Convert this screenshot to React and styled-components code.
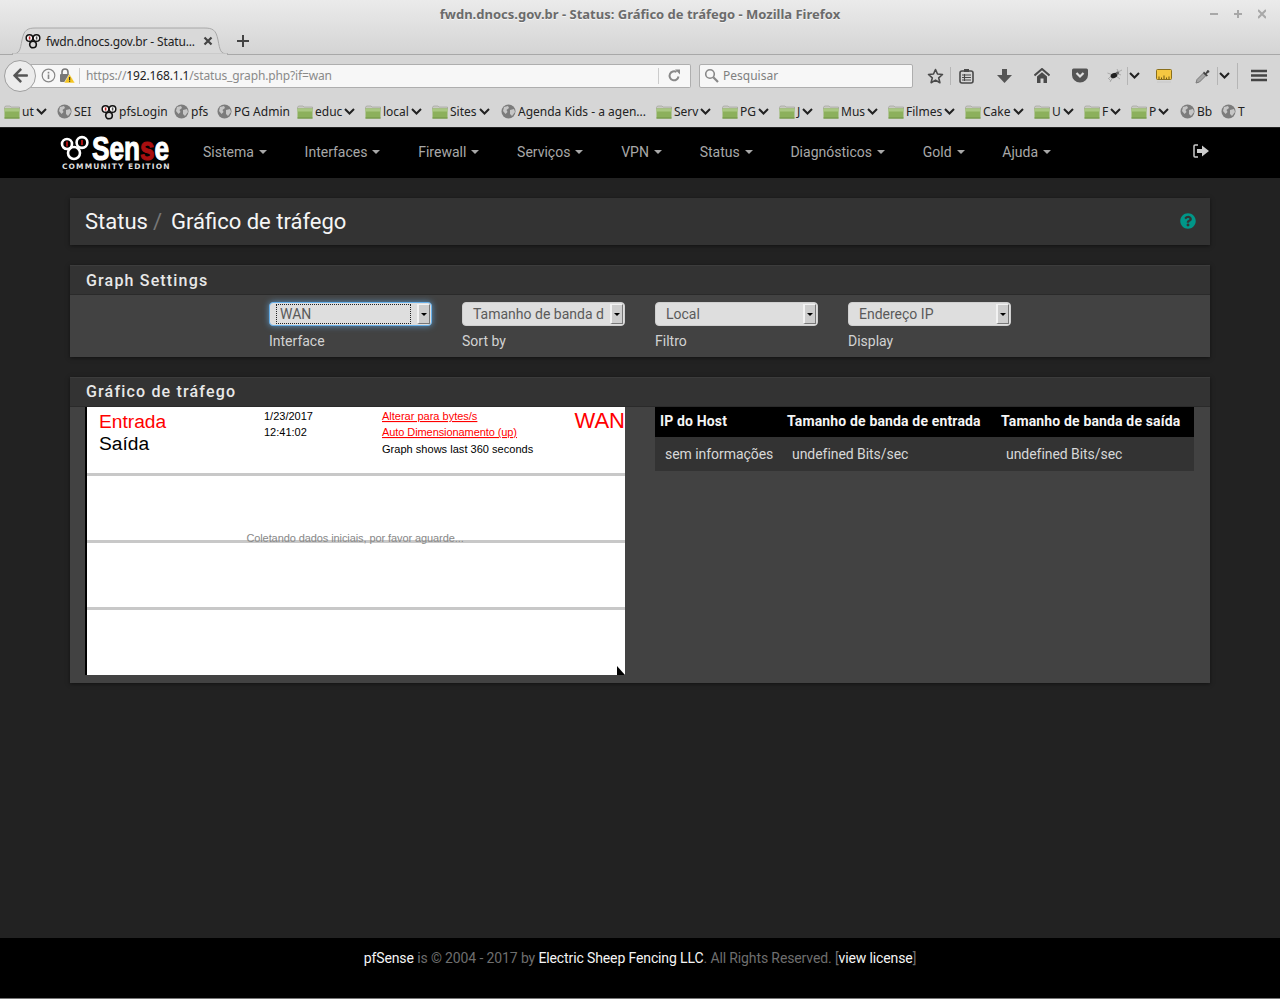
import * as React from 'react'
import styled, { createGlobalStyle } from 'styled-components'
import { FaArrowLeft, FaQuestionCircle } from 'react-icons/fa'

const BOOKMARKS = [
  { kind: 'folder', label: 'ut', more: true, w: 53 },
  { kind: 'globe', label: 'SEI', w: 44 },
  { kind: 'pf', label: 'pfsLogin', w: 73 },
  { kind: 'globe', label: 'pfs', w: 43 },
  { kind: 'globe', label: 'PG Admin', w: 80 },
  { kind: 'folder', label: 'educ', more: true, w: 68 },
  { kind: 'folder', label: 'local', more: true, w: 67 },
  { kind: 'folder', label: 'Sites', more: true, w: 69 },
  { kind: 'globe', label: 'Agenda Kids - a agen...', w: 155 },
  { kind: 'folder', label: 'Serv', more: true, w: 66 },
  { kind: 'folder', label: 'PG', more: true, w: 57 },
  { kind: 'folder', label: 'J', more: true, w: 44 },
  { kind: 'folder', label: 'Mus', more: true, w: 65 },
  { kind: 'folder', label: 'Filmes', more: true, w: 77 },
  { kind: 'folder', label: 'Cake', more: true, w: 69 },
  { kind: 'folder', label: 'U', more: true, w: 50 },
  { kind: 'folder', label: 'F', more: true, w: 47 },
  { kind: 'folder', label: 'P', more: true, w: 49 },
  { kind: 'globe', label: 'Bb', w: 41 },
  { kind: 'globe', label: 'T', w: 30 },
]

const NAV = ['Sistema', 'Interfaces', 'Firewall', 'Serviços', 'VPN', 'Status', 'Diagnósticos', 'Gold', 'Ajuda']

const SELECTS = [
  { value: 'WAN', label: 'Interface', focused: true },
  { value: 'Tamanho de banda d', label: 'Sort by' },
  { value: 'Local', label: 'Filtro' },
  { value: 'Endereço IP', label: 'Display' },
]

const FolderIcon = () => (
  <svg width="16" height="14" viewBox="0 0 16 14">
    <path d="M0.5 2.5 L1.5 1 H6 L7 2 H15.5 V4 H0.5 Z" fill="#c9c9c4" stroke="#9a9a94" strokeWidth="0.6" />
    <rect x="0.5" y="3.5" width="15" height="10" fill="#8cb05c" />
    <rect x="0.5" y="3.5" width="15" height="3" fill="#a9c782" />
    <rect x="0.5" y="12.5" width="15" height="1" fill="#6f9244" />
  </svg>
)

const GlobeIcon = () => (
  <svg width="15" height="15" viewBox="0 0 15 15">
    <circle cx="7.5" cy="7.5" r="7" fill="#7c7c7c" />
    <path d="M3 3 L7 2 L8 4 L5.5 6 L6.5 8 L4.5 10 L2 7 Z M9 6 L13 5 L14 8 L11 12 L9 10 Z" fill="#c6c6c6" />
  </svg>
)

const PfIcon = () => (
  <svg width="16" height="16" viewBox="0 0 16 16">
    <circle cx="4.5" cy="5" r="3.3" fill="#fff" stroke="#111" strokeWidth="1.5" />
    <circle cx="11.5" cy="5" r="3.3" fill="#fff" stroke="#111" strokeWidth="1.5" />
    <circle cx="8" cy="11.5" r="3.3" fill="none" stroke="#111" strokeWidth="1.6" />
    <rect x="3.8" y="3.4" width="1.6" height="3.2" fill="#b22" />
    <rect x="10.8" y="3.4" width="1.6" height="3.2" fill="#555" />
  </svg>
)

const Chevron = () => (
  <svg width="11" height="7" viewBox="0 0 11 7">
    <path d="M1 1 L5.5 5.5 L10 1" fill="none" stroke="#222" strokeWidth="2" />
  </svg>
)

const BookmarkIcon = ({ kind }) => {
  if (kind === 'folder') return <FolderIcon />
  if (kind === 'pf') return <PfIcon />
  return <GlobeIcon />
}

const PageGlobal = createGlobalStyle`
  html, body {
    margin: 0;
    padding: 0;
    height: 100%;
    overflow: hidden;
    background: #222;
  }
  * { box-sizing: border-box; }
`

const Wrapper = styled.div`
  width: 1280px;
  height: 999px;
  display: flex;
  flex-direction: column;
  font-family: Roboto, sans-serif;
`

const Chrome = styled.div`
  flex: none;
  height: 128px;
  display: flex;
  flex-direction: column;
  background: #d6d6d6;
  border-bottom: 1px solid #222;
  font-family: "Noto Sans", sans-serif;
`

const TitleBar = styled.div`
  height: 55px;
  flex: none;
  display: flex;
  flex-direction: column;
  background: linear-gradient(#ebebeb, #d4d4d4);
  border-bottom: 1px solid #a8a8a8;
`

const WindowTitle = styled.div`
  height: 27px;
  flex: none;
  padding-top: 6px;
  text-align: center;
  font-size: 13px;
  line-height: 17px;
  font-weight: 700;
  color: #6b6b6b;
  text-shadow: 0 1px 0 #f4f4f4;
  position: relative;
`

const WindowControls = styled.div`
  position: absolute;
  right: 14px;
  top: 8px;
  display: flex;
  gap: 16px;
`

const TabStrip = styled.div`
  display: flex;
  align-items: center;
  height: 27px;
  padding-left: 12px;
`

const Tab = styled.div`
  position: relative;
  width: 216px;
  height: 28px;
  margin-bottom: -1px;
  display: flex;
  align-items: center;
  padding: 0 15px 0 13px;
  gap: 5px;
  font-size: 12px;
  letter-spacing: -0.15px;
  color: #222;
`

const TabShape = styled.svg`
  position: absolute;
  left: 0;
  top: 0;
`

const TabLabel = styled.span`
  position: relative;
  flex: 1;
  white-space: nowrap;
`

const TabIcon = styled.span`
  position: relative;
  display: flex;
`

const NewTab = styled.div`
  display: flex;
  margin-left: 8px;
`

const ToolRow = styled.div`
  height: 41px;
  flex: none;
  display: flex;
  align-items: center;
  padding-left: 4px;
`

const BackButton = styled.div`
  width: 32px;
  height: 32px;
  flex: none;
  border-radius: 50%;
  background: #ececec;
  border: 1px solid #9f9f9f;
  display: flex;
  align-items: center;
  justify-content: center;
  color: #555;
  font-size: 17px;
  position: relative;
  z-index: 1;
`

const UrlBar = styled.div`
  width: 660px;
  height: 24px;
  margin-left: -5px;
  flex: none;
  display: flex;
  align-items: center;
  background: #f7f7f7;
  border: 1px solid #aeaeae;
  border-left: none;
  border-radius: 0 2px 2px 0;
  padding-left: 10px;
  font-size: 12px;
  color: #8a8a8a;
`

const UrlSecurity = styled.div`
  display: flex;
  align-items: center;
  gap: 3px;
  width: 39px;
  height: 16px;
  margin-right: 6px;
  border-right: 1px solid #ccc;
`

const UrlText = styled.div`
  flex: 1;
  white-space: nowrap;
  letter-spacing: -0.14px;
`

const UrlHost = styled.span`
  color: #222;
`

const Reload = styled.div`
  width: 32px;
  height: 16px;
  border-left: 1px solid #ccc;
  display: flex;
  align-items: center;
  justify-content: center;
`

const SearchBar = styled.div`
  width: 214px;
  height: 24px;
  margin-left: 8px;
  flex: none;
  display: flex;
  align-items: center;
  gap: 4px;
  padding-left: 4px;
  background: #f7f7f7;
  border: 1px solid #aeaeae;
  border-radius: 2px;
  font-size: 12px;
  color: #808080;
`

const ToolGroup = styled.div`
  display: flex;
  align-items: center;
  margin-left: 8px;
  height: 37px;
  color: #555;
`

const Slot = styled.div`
  width: ${p => p.$w}px;
  flex: none;
  display: flex;
  justify-content: center;
  align-items: center;
  font-size: 15px;
`

const ToolDivider = styled.div`
  width: 1px;
  flex: none;
  height: ${p => p.$h}px;
  background: #b5b5b5;
  margin-left: ${p => p.$ml || 0}px;
`

const BookmarkRow = styled.div`
  flex: 1;
  display: flex;
  align-items: center;
  padding-left: 4px;
  font-size: 12px;
  color: #222;
  white-space: nowrap;
`

const Bookmark = styled.div`
  width: ${p => p.$w}px;
  flex: none;
  display: flex;
  align-items: center;
  gap: 2px;
`

const TopNav = styled.nav`
  flex: none;
  height: 51px;
  background: #000;
  display: flex;
  align-items: center;
  padding-left: 60px;
  border-bottom: 1px solid #222;
`

const Logo = styled.div`
  width: 112px;
  flex: none;
  height: 37px;
  display: flex;
  flex-wrap: wrap;
  align-items: flex-start;
  margin-right: 31px;
`

const LogoRings = styled.svg`
  overflow: visible;
`

const LogoWord = styled.span`
  display: block;
  font-family: "Liberation Sans", sans-serif;
  font-weight: 700;
  font-size: 34px;
  line-height: 27px;
  height: 27px;
  color: #fff;
  -webkit-text-stroke: 1.1px currentColor;
  transform: scaleX(0.77);
  transform-origin: left center;
  white-space: nowrap;
  width: 80px;
  margin-left: 1px;
`

const LogoRed = styled.span`
  color: #a80f10;
`

const LogoSub = styled.div`
  width: 112px;
  margin-top: 0;
  padding-left: 2px;
  font-family: "DejaVu Sans", sans-serif;
  font-size: 7.5px;
  line-height: 9px;
  font-weight: 700;
  letter-spacing: 1.1px;
  color: #ddd;
  white-space: nowrap;
`

const NavList = styled.div`
  display: flex;
  gap: 37.75px;
  flex: 1;
  margin-top: -2px;
`

const NavLink = styled.div`
  display: flex;
  align-items: center;
  gap: 5px;
  font-size: 14px;
  color: #a8a8a8;
  white-space: nowrap;
`

const Caret = styled.span`
  width: 0;
  height: 0;
  border-left: 4px solid transparent;
  border-right: 4px solid transparent;
  border-top: 4px solid #a8a8a8;
`

const LogoutLink = styled.div`
  display: flex;
  margin-right: 71px;
  margin-top: -4px;
`

const Content = styled.main`
  flex: 1;
  background: #222;
  padding: 19px 70px 0;
`

const TitlePanel = styled.div`
  height: 47px;
  background: #333;
  box-shadow: 0 1px 4px rgba(0, 0, 0, 0.5);
  display: flex;
  align-items: center;
  justify-content: space-between;
  padding: 0 14px 0 15px;
  margin-bottom: 20px;
`

const Crumbs = styled.h1`
  margin: 0;
  font-size: 22px;
  font-weight: 400;
  color: #f5f5f5;
  display: flex;
  align-items: baseline;
`

const CrumbSep = styled.span`
  color: #777;
  margin: 0 9px 0 5px;
`

const HelpLink = styled.div`
  display: flex;
  color: #009688;
  font-size: 16px;
  margin-top: -1px;
`

const Panel = styled.section`
  background: #424242;
  box-shadow: 0 1px 4px rgba(0, 0, 0, 0.5);
  margin-bottom: 20px;
`

const PanelHeading = styled.h2`
  margin: 0;
  height: 30px;
  padding: 0 16px;
  background: #333;
  border-top: 1px solid #3c3c3c;
  border-bottom: 1px solid #2a2a2a;
  font-size: 16px;
  line-height: ${p => p.$lh}px;
  font-weight: 500;
  letter-spacing: 1.17px;
  color: #e8e8e8;
`

const SettingsBody = styled.div`
  height: 62px;
  display: grid;
  grid-template-columns: repeat(4, 193px);
  padding: 7px 0 0 199px;
`

const Field = styled.div`
  display: flex;
  flex-direction: column;
  gap: 7px;
`

const SelectBox = styled.div`
  width: 163px;
  height: 24px;
  display: flex;
  align-items: center;
  padding: 1px 1px 1px ${p => (p.$focused ? 6 : 10)}px;
  border-radius: 4px;
  background: #dedede;
  color: #5a5a5a;
  font-size: 14px;
  border: 1px solid ${p => (p.$focused ? '#66afe9' : '#cfcfcf')};
  box-shadow: ${p => (p.$focused ? '0 0 6px rgba(102, 175, 233, 0.75)' : 'none')};
`

const SelectValue = styled.span`
  flex: 1;
  min-width: 0;
  white-space: nowrap;
  line-height: 20px;
  margin-right: ${p => (p.$focused ? 6 : 7)}px;
  padding-left: ${p => (p.$focused ? 4 : 0)}px;
  outline: ${p => (p.$focused ? '1px dotted #222' : 'none')};
  outline-offset: -1px;
`

const SelectArrow = styled.span`
  width: 13px;
  height: 20px;
  flex: none;
  background: #cdcdcd;
  border-left: 2px solid #f2f2f2;
  border-top: 1px solid #f2f2f2;
  border-right: 1px solid #777;
  border-bottom: 1px solid #777;
  display: flex;
  align-items: center;
  justify-content: center;
  &::after {
    content: '';
    border-left: 3px solid transparent;
    border-right: 3px solid transparent;
    border-top: 3px solid #000;
  }
`

const FieldLabel = styled.label`
  font-size: 14px;
  line-height: 17px;
  color: #d2d2d2;
`

const GraphBody = styled.div`
  display: flex;
  align-items: flex-start;
  gap: 30px;
  padding: 0 16px 8px 15px;
`

const GraphFrame = styled.div`
  position: relative;
  width: 540px;
  height: 268px;
  flex: none;
  background: #fff;
  border-left: 2px solid #000;
`

const ResizeHandle = styled.svg`
  position: absolute;
  right: 0;
  bottom: 0;
`

const HostTable = styled.div`
  width: 539px;
  flex: none;
  font-size: 14px;
`

const HostRow = styled.div`
  display: grid;
  grid-template-columns: 127px 214px 198px;
  align-items: center;
  height: ${p => p.$h}px;
  background: ${p => p.$bg};
`

const HostHead = styled.div`
  padding: 0 0 2px 5px;
  font-weight: 700;
  letter-spacing: 0.15px;
  color: #f5f5f5;
  white-space: nowrap;
`

const HostCell = styled.div`
  padding-left: 10px;
  letter-spacing: -0.05px;
  color: #d8d8d8;
  white-space: nowrap;
`

const Footer = styled.footer`
  flex: none;
  height: 61px;
  background: #000;
  border-bottom: 1px solid #777;
  text-align: center;
  padding-top: 12px;
  font-size: 14px;
  line-height: 17px;
  letter-spacing: -0.12px;
  color: #6e6e6e;
`

const FooterLink = styled.span`
  color: #f5f5f5;
`

const App = () => (
  <Wrapper>
    <PageGlobal />
    <Chrome>
      <TitleBar>
        <WindowTitle>
          fwdn.dnocs.gov.br - Status: Gráfico de tráfego - Mozilla Firefox
          <WindowControls>
            <svg width="8" height="12" viewBox="0 0 8 12"><path d="M0 6 H8" stroke="#a8a8a8" strokeWidth="2" /></svg>
            <svg width="8" height="12" viewBox="0 0 8 12"><path d="M0 6 H8 M4 2 V10" stroke="#a8a8a8" strokeWidth="2" /></svg>
            <svg width="8" height="12" viewBox="0 0 8 12"><path d="M0 2 L8 10 M8 2 L0 10" stroke="#a8a8a8" strokeWidth="2" /></svg>
          </WindowControls>
        </WindowTitle>
        <TabStrip>
          <Tab>
            <TabShape width="216" height="28" viewBox="0 0 216 28">
              <path d="M0 27 C8 27 8 23 10 13 C12 3 15 1 24 1 H192 C201 1 204 3 206 13 C208 23 208 27 216 27 Z" fill="#d9d9d9" stroke="#a8a8a8" />
              <path d="M1 27.5 H215" stroke="#d6d6d6" strokeWidth="2" />
            </TabShape>
            <TabIcon><PfIcon /></TabIcon>
            <TabLabel>fwdn.dnocs.gov.br - Statu...</TabLabel>
            <TabIcon>
              <svg width="10" height="10" viewBox="0 0 10 10"><path d="M1.5 1.5 L8.5 8.5 M8.5 1.5 L1.5 8.5" stroke="#444" strokeWidth="2.2" /></svg>
            </TabIcon>
          </Tab>
          <NewTab>
            <svg width="14" height="14" viewBox="0 0 14 14"><path d="M7 1 V13 M1 7 H13" stroke="#444" strokeWidth="2" /></svg>
          </NewTab>
        </TabStrip>
      </TitleBar>
      <ToolRow>
        <BackButton><FaArrowLeft /></BackButton>
        <UrlBar>
          <UrlSecurity>
            <svg width="15" height="15" viewBox="0 0 15 15">
              <circle cx="7.5" cy="7.5" r="6.3" fill="none" stroke="#888" strokeWidth="1.2" />
              <rect x="6.7" y="6.5" width="1.6" height="4.5" fill="#888" />
              <rect x="6.7" y="3.8" width="1.6" height="1.7" fill="#888" />
            </svg>
            <svg width="16" height="15" viewBox="0 0 16 15">
              <path d="M3 6 V4 a3 3 0 0 1 6 0 V6" fill="none" stroke="#777" strokeWidth="1.6" />
              <rect x="1" y="6" width="10" height="8" rx="1" fill="#777" />
              <path d="M10.5 6 L16 15 H5 Z" fill="#f5c51e" stroke="#f7f7f7" strokeWidth="0.6" />
              <rect x="10" y="9" width="1.2" height="3" fill="#333" />
              <rect x="10" y="12.6" width="1.2" height="1.2" fill="#333" />
            </svg>
          </UrlSecurity>
          <UrlText>https://<UrlHost>192.168.1.1</UrlHost>/status_graph.php?if=wan</UrlText>
          <Reload>
            <svg width="13" height="13" viewBox="0 0 13 13">
              <path d="M10.5 7.5 A4.5 4.5 0 1 1 8.5 3" fill="none" stroke="#888" strokeWidth="2" />
              <path d="M7 0.5 L12 0.5 L12 5.5 Z" fill="#888" />
            </svg>
          </Reload>
        </UrlBar>
        <SearchBar>
          <svg width="15" height="15" viewBox="0 0 15 15">
            <circle cx="6" cy="6" r="4.3" fill="none" stroke="#888" strokeWidth="1.6" />
            <path d="M9.3 9.3 L14 14" stroke="#888" strokeWidth="2.2" />
          </svg>
          Pesquisar
        </SearchBar>
        <ToolGroup>
          <Slot $w={28}>
            <svg width="17" height="16" viewBox="0 0 17 16">
              <path d="M8.5 1.5 L10.5 6 L15.5 6.5 L11.7 9.8 L12.9 14.7 L8.5 12.1 L4.1 14.7 L5.3 9.8 L1.5 6.5 L6.5 6 Z" fill="none" stroke="#4a4a4a" strokeWidth="1.6" strokeLinejoin="round" />
            </svg>
          </Slot>
          <ToolDivider $h={18} $ml={1} />
          <Slot $w={30}>
            <svg width="15" height="16" viewBox="0 0 15 16">
              <rect x="1" y="3" width="13" height="12" rx="2" fill="none" stroke="#4a4a4a" strokeWidth="1.6" />
              <rect x="5" y="1" width="5" height="3" fill="#4a4a4a" />
              <path d="M3 7 H12 M3 9.5 H12 M3 12 H12 M5.5 6 V13" stroke="#4a4a4a" strokeWidth="1.1" />
            </svg>
          </Slot>
          <Slot $w={46}>
            <svg width="15" height="14" viewBox="0 0 15 14">
              <path d="M5 0 H10 V6 H15 L7.5 14 L0 6 H5 Z" fill="#555" />
            </svg>
          </Slot>
          <Slot $w={30}>
            <svg width="16" height="15" viewBox="0 0 16 15">
              <path d="M0.5 7.5 L8 1 L15.5 7.5" fill="none" stroke="#4a4a4a" strokeWidth="2" />
              <path d="M3 8.5 L8 4.2 L13 8.5 V15 H9.5 V10.5 H6.5 V15 H3 Z" fill="#4a4a4a" />
            </svg>
          </Slot>
          <Slot $w={46}>
            <svg width="16" height="15" viewBox="0 0 16 15">
              <path d="M1.5 0.5 H14.5 A1.5 1.5 0 0 1 16 2 V7 A8 7.5 0 0 1 0 7 V2 A1.5 1.5 0 0 1 1.5 0.5 Z" fill="#555" />
              <path d="M4.5 5 L8 8.5 L11.5 5" fill="none" stroke="#e0e0e0" strokeWidth="2.2" />
            </svg>
          </Slot>
          <Slot $w={24}>
            <svg width="16" height="15" viewBox="0 0 16 15">
              <path d="M0.5 5 L6 7 L2 10 M15 2 L9 5 L14 7 M6 9 L3 14 M9 8 L13 11 M1 10 L4 13 M10 1 L12 5" fill="none" stroke="#a9a9a9" strokeWidth="1" />
              <ellipse cx="7" cy="7.5" rx="3.5" ry="2.5" fill="#222" transform="rotate(-25 7 7.5)" />
              <circle cx="10.5" cy="5" r="1.6" fill="#666" />
            </svg>
          </Slot>
          <ToolDivider $h={18} />
          <Slot $w={12}><Chevron /></Slot>
          <Slot $w={48}>
            <svg width="16" height="15" viewBox="0 0 16 15">
              <rect x="0.5" y="1.5" width="15" height="10" rx="1" fill="#f5c842" stroke="#8a6f1c" />
              <path d="M3 11 V8.5 M5.5 11 V9.5 M8 11 V7.5 M10.5 11 V9.5 M13 11 V8.5" stroke="#6d5714" />
              <rect x="1" y="13.5" width="14" height="1" fill="#c8c8c8" />
            </svg>
          </Slot>
          <Slot $w={29}>
            <svg width="16" height="16" viewBox="0 0 16 16">
              <path d="M1 15 L2 11.5 L8.5 5 L11 7.5 L4.5 14 Z" fill="#a6a6a6" stroke="#7a7a7a" />
              <path d="M9 3.5 L10.5 5 L12.5 2 A2 2 0 0 1 14.5 4 L11.5 6 L13 7.5 L11.5 8.5 L8 5 Z" fill="#444" />
            </svg>
          </Slot>
          <ToolDivider $h={18} />
          <Slot $w={12}><Chevron /></Slot>
          <Slot $w={7} />
          <ToolDivider $h={26} />
          <Slot $w={42}>
            <svg width="16" height="13" viewBox="0 0 16 13">
              <path d="M0 2 H16 M0 6.5 H16 M0 11 H16" stroke="#444" strokeWidth="2.4" />
            </svg>
          </Slot>
        </ToolGroup>
      </ToolRow>
      <BookmarkRow>
        {BOOKMARKS.map(b => (
          <Bookmark key={b.label + b.w} $w={b.w}>
            <BookmarkIcon kind={b.kind} />
            {b.label}
            {b.more && <Chevron />}
          </Bookmark>
        ))}
      </BookmarkRow>
    </Chrome>

    <TopNav>
      <Logo>
        <LogoRings width="31" height="25" viewBox="0 0 31 25">
          <circle cx="7" cy="9" r="5" fill="#000" stroke="#fff" strokeWidth="2.6" />
          <circle cx="22" cy="7.5" r="5.4" fill="#000" stroke="#fff" strokeWidth="2.6" />
          <circle cx="14" cy="18" r="6" fill="none" stroke="#fff" strokeWidth="2.6" />
          <rect x="6" y="6.5" width="2" height="5" fill="#a80f10" />
          <rect x="21" y="5" width="2" height="5" fill="#a80f10" />
        </LogoRings>
        <LogoWord>Sen<LogoRed>s</LogoRed>e</LogoWord>
        <LogoSub>COMMUNITY EDITION</LogoSub>
      </Logo>
      <NavList>
        {NAV.map(item => (
          <NavLink key={item}>{item}<Caret /></NavLink>
        ))}
      </NavList>
      <LogoutLink>
        <svg width="16" height="14" viewBox="0 0 16 14">
          <path d="M5 1 H2 Q1 1 1 2 V12 Q1 13 2 13 H5" fill="none" stroke="#ccc" strokeWidth="1.5" />
          <path d="M4 5 H9 V1.5 L16 7 L9 12.5 V9 H4 Z" fill="#ccc" />
        </svg>
      </LogoutLink>
    </TopNav>

    <Content>
      <TitlePanel>
        <Crumbs>Status<CrumbSep>/</CrumbSep>Gráfico de tráfego</Crumbs>
        <HelpLink><FaQuestionCircle /></HelpLink>
      </TitlePanel>

      <Panel>
        <PanelHeading $lh={29}>Graph Settings</PanelHeading>
        <SettingsBody>
          {SELECTS.map(s => (
            <Field key={s.label}>
              <SelectBox $focused={s.focused}>
                <SelectValue $focused={s.focused}>{s.value}</SelectValue>
                <SelectArrow />
              </SelectBox>
              <FieldLabel>{s.label}</FieldLabel>
            </Field>
          ))}
        </SettingsBody>
      </Panel>

      <Panel>
        <PanelHeading $lh={28}>Gráfico de tráfego</PanelHeading>
        <GraphBody>
          <GraphFrame>
            <svg width="538" height="268" viewBox="0 0 538 268" style={{ display: 'block' }} fontFamily="Liberation Sans, sans-serif">
              <rect y="66" width="538" height="3" fill="#c8c8c8" />
              <rect y="133" width="538" height="3" fill="#c8c8c8" />
              <rect y="200" width="538" height="3" fill="#c8c8c8" />
              <text x="12" y="21" fontSize="19.2" fill="#f00">Entrada</text>
              <text x="12" y="43" fontSize="19.2" fill="#000">Saída</text>
              <text x="177" y="13" fontSize="11" fill="#000">1/23/2017</text>
              <text x="177" y="29" fontSize="11" fill="#000">12:41:02</text>
              <text x="295" y="13" fontSize="11" fill="#f00" textDecoration="underline">Alterar para bytes/s</text>
              <text x="295" y="29" fontSize="11" fill="#f00" textDecoration="underline" letterSpacing="-0.08">Auto Dimensionamento (up)</text>
              <text x="295" y="46" fontSize="11" fill="#000" letterSpacing="0.03">Graph shows last 360 seconds</text>
              <text x="538" y="21" fontSize="22" fill="#f00" textAnchor="end">WAN</text>
              <text x="268" y="135" fontSize="11" fill="#888" textAnchor="middle" letterSpacing="-0.09">Coletando dados iniciais, por favor aguarde...</text>
            </svg>
            <ResizeHandle width="8" height="9" viewBox="0 0 8 9">
              <path d="M0 0 L8 9 H0 Z" fill="#000" />
            </ResizeHandle>
          </GraphFrame>
          <HostTable>
            <HostRow $h={30} $bg="#000">
              <HostHead>IP do Host</HostHead>
              <HostHead>Tamanho de banda de entrada</HostHead>
              <HostHead>Tamanho de banda de saída</HostHead>
            </HostRow>
            <HostRow $h={34} $bg="#333">
              <HostCell>sem informações</HostCell>
              <HostCell>undefined Bits/sec</HostCell>
              <HostCell>undefined Bits/sec</HostCell>
            </HostRow>
          </HostTable>
        </GraphBody>
      </Panel>
    </Content>

    <Footer>
      <FooterLink>pfSense</FooterLink> is © 2004 - 2017 by <FooterLink>Electric Sheep Fencing LLC</FooterLink>. All Rights Reserved. [<FooterLink>view license</FooterLink>]
    </Footer>
  </Wrapper>
)

export default App
